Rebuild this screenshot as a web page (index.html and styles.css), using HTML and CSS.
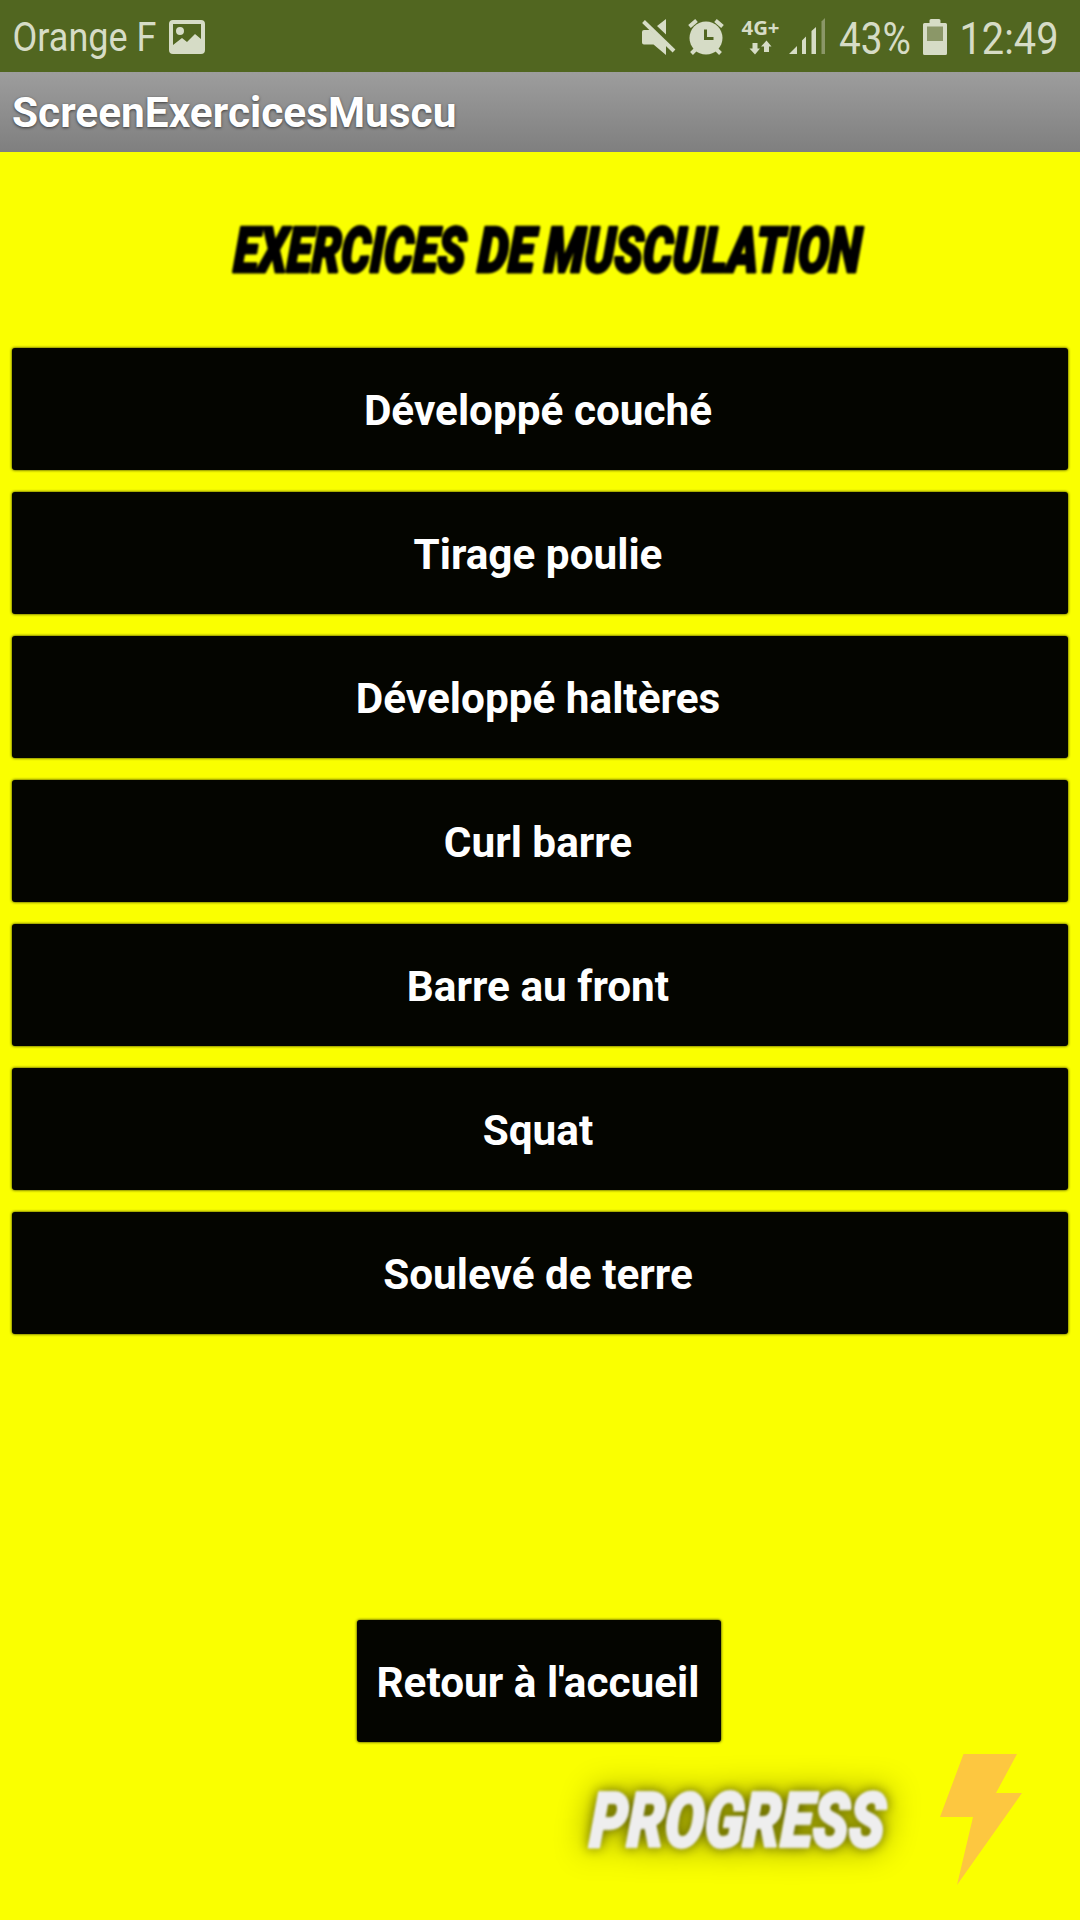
FILE: index.html
```html
<!DOCTYPE html>
<html lang="fr">

<head>
  <meta charset="UTF-8">
  <meta name="viewport" content="width=device-width, initial-scale=1.0">
  <title>ScreenExercicesMuscu</title>
  <link rel="stylesheet" href="styles.css">
</head>

<body>
  <div class="screen">
    <!-- status bar -->
    <div class="status-bar">
      <svg class="carrier" width="210" height="72" viewBox="0 0 210 72">
        <text x="12.5" y="51.3" font-size="41.5" textLength="144" lengthAdjust="spacingAndGlyphs">Orange F</text>
        <path fill-rule="evenodd" d="M173 20h28q4 0 4 4v26q0 4-4 4h-28q-4 0-4-4V24q0-4 4-4zM173 24v21l9-7 5 4 8-8 6 5V24zM180 27a4 4 0 1 1 0 8 4 4 0 0 1 0-8z"/>
      </svg>
      <svg class="status-icons" width="440" height="72" viewBox="640 0 440 72">
        <!-- mute -->
        <path d="M644 30h6l16 14V55l-12.500-10.500H644q-2 0-2-2V32q0-2 2-2zM666 19v15.500l-9-8.500z"/>
        <path class="slash" d="M643.500 21.500 674 51"/>
        <!-- alarm -->
        <circle cx="706" cy="38" r="16.500"/>
        <path class="line" d="M689.500 26.500l7-6M722.500 26.500l-7-6M696 49l-4.500 4.500M716 49l4.500 4.500"/>
        <path class="hand" d="M705.500 29.500v9h8"/>
        <!-- network -->
        <text class="network" x="741.500" y="34.500" font-size="19" textLength="38" lengthAdjust="spacingAndGlyphs">4G+</text>
        <path d="M752.500 43h5v5.500h2.500l-5 6-5.500-6h3zM764 52v-5.500h-3l5.500-6 5 6H769V52z"/>
        <path d="M789 54l8-8v8zM802 54V40.500l4-4V54zM811.500 54V31l4.500-4V54z"/>
        <path class="faded" d="M821.500 54V21.500l3.500-3.500V54z"/>
        <text x="839" y="54" font-size="45" textLength="72" lengthAdjust="spacingAndGlyphs">43%</text>
        <!-- battery -->
        <path d="M931 19h8q1.500 0 1.500 1.500V23h5q1.500 0 1.500 1.500v29q0 1.500-1.500 1.500h-21q-1.500 0-1.500-1.500v-29q0-1.500 1.500-1.500h5v-2.500q0-1.500 1.500-1.500z"/>
        <path class="level" d="M927 26.500h16V41h-16z"/>
        <text x="959.500" y="54" font-size="45" textLength="99" lengthAdjust="spacingAndGlyphs">12:49</text>
      </svg>
    </div>

    <div class="title-bar">ScreenExercicesMuscu</div>

    <!-- heading -->
    <svg class="heading" width="1080" height="196" viewBox="0 152 1080 196">
      <g transform="translate(0 271.5) skewX(-3)">
        <text x="233" y="0" textLength="232" lengthAdjust="spacingAndGlyphs">EXERCICES</text>
        <text x="477" y="0" textLength="57" lengthAdjust="spacingAndGlyphs">DE</text>
        <text x="544" y="0" textLength="316" lengthAdjust="spacingAndGlyphs">MUSCULATION</text>
      </g>
    </svg>

    <div class="exercise-list">
      <button class="btn">Développé couché</button>
      <button class="btn">Tirage poulie</button>
      <button class="btn">Développé haltères</button>
      <button class="btn">Curl barre</button>
      <button class="btn">Barre au front</button>
      <button class="btn">Squat</button>
      <button class="btn">Soulevé de terre</button>
    </div>

    <button class="btn btn-home">Retour à l'accueil</button>

    <!-- logo -->
    <svg class="logo" width="1080" height="178" viewBox="0 1742 1080 178">
      <text class="progress" transform="translate(589 1846.5) skewX(-3)" x="0" y="0" textLength="295" lengthAdjust="spacingAndGlyphs">PROGRESS</text>
      <path class="bolt" d="M963.500 1754H1017l-21 39h26l-65 92 16-68h-33z"/>
    </svg>
  </div>
</body>

</html>
```
FILE: styles.css
```css
* {
  margin: 0;
  padding: 0;
  box-sizing: border-box;
}

body {
  font-family: Roboto, 'Liberation Sans', sans-serif;
  background: #faff00;
}

svg {
  display: block;
}

.screen {
  width: 1080px;
  height: 1920px;
  background: #faff00;
  display: flex;
  flex-direction: column;
  overflow: hidden;
}

.status-bar {
  height: 72px;
  background: #516620;
  display: flex;
  justify-content: space-between;
  fill: #d6dcc6;
}

.status-icons .slash,
.status-icons .line,
.status-icons .hand {
  fill: none;
  stroke: #d6dcc6;
  stroke-width: 4;
}

.status-icons .hand {
  stroke: #516620;
  stroke-width: 3;
}

.status-icons .network {
  font-family: 'Open Sans', sans-serif;
  font-weight: 700;
}

.status-icons .faded,
.status-icons .level {
  fill: #8b9768;
}

.title-bar {
  height: 80px;
  padding-left: 12px;
  background: linear-gradient(#9d9d9d, #7f7f7f);
  color: #fff;
  font-size: 42.4px;
  font-weight: 700;
  line-height: 82px;
  text-shadow: 0 1px 3px rgba(0, 0, 0, 0.6);
}

.heading {
  font-size: 63px;
  font-style: italic;
  font-weight: 900;
  stroke: #000;
  stroke-width: 3;
  stroke-linejoin: round;
  filter: blur(1px);
}

.exercise-list {
  display: flex;
  flex-direction: column;
  gap: 22px;
  padding: 0 12px;
}

.btn {
  width: 100%;
  height: 122px;
  background: #040500;
  color: #fff;
  border: none;
  border-radius: 3px;
  font-family: inherit;
  font-size: 42.3px;
  font-weight: 700;
  padding-top: 2px;
  padding-right: 2px;
  box-shadow: 0 0 3px rgba(0, 0, 0, 0.9);
}

.exercise-list .btn {
  padding-right: 4px;
}

.btn-home {
  width: 364px;
  margin-top: 286px;
  margin-left: 357px;
}

.logo .progress {
  fill: #eee;
  stroke: #eee;
  stroke-width: 3;
  stroke-linejoin: round;
  font-size: 76px;
  font-style: italic;
  font-weight: 900;
  filter: blur(0.8px) drop-shadow(0 0 6px rgba(0, 0, 0, 0.5)) drop-shadow(0 0 16px rgba(0, 0, 0, 0.4));
}

.logo .bolt {
  fill: #fdc740;
}
```
